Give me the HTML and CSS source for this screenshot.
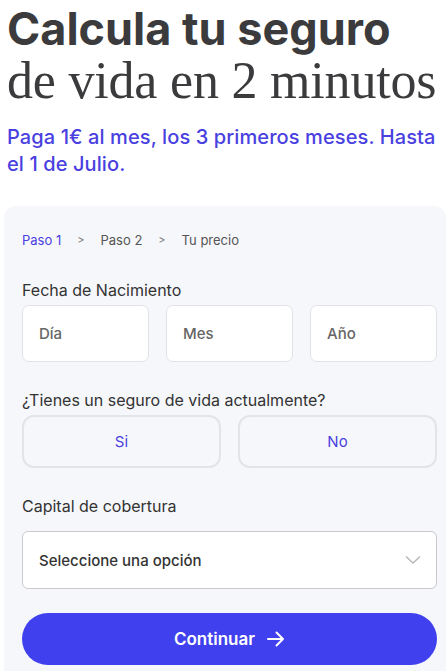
FILE: index.html
```html
<!DOCTYPE html>
<html lang="es">
<head>
<meta charset="utf-8">
<link rel="stylesheet" href="styles.css">
</head>
<body>
<header class="hero">
  <h1 class="title"><span class="title-bold">Calcula tu seguro</span><span class="title-serif">de vida en 2 minutos</span></h1>
  <p class="promo">Paga 1€ al mes, los 3 primeros meses. Hasta el 1 de Julio.</p>
</header>
<section class="card">
  <nav class="steps">
    <span class="step active">Paso 1</span>
    <span class="sep">&gt;</span>
    <span class="step">Paso 2</span>
    <span class="sep">&gt;</span>
    <span class="step">Tu precio</span>
  </nav>
  <div class="field">
    <label class="label">Fecha de Nacimiento</label>
    <div class="date-row">
      <div class="input">Día</div>
      <div class="input">Mes</div>
      <div class="input">Año</div>
    </div>
  </div>
  <div class="field">
    <label class="label">¿Tienes un seguro de vida actualmente?</label>
    <div class="choice-row">
      <div class="choice">Si</div>
      <div class="choice">No</div>
    </div>
  </div>
  <div class="field field-select">
    <label class="label">Capital de cobertura</label>
    <div class="select">
      <span>Seleccione una opción</span>
      <svg class="chev" width="16" height="10" viewBox="0 0 16 10"><path d="M1 1.5 L8 8 L15 1.5" fill="none" stroke="#b5b5ba" stroke-width="1.4"/></svg>
    </div>
  </div>
  <div class="cta">
    <span>Continuar</span>
    <svg width="18" height="16" viewBox="0 0 18 16"><path d="M1 8 H16 M9.5 1.5 L16 8 L9.5 14.5" fill="none" stroke="#fff" stroke-width="2" stroke-linecap="round" stroke-linejoin="round"/></svg>
  </div>
</section>
</body>
</html>
```
FILE: styles.css
```css
* { box-sizing: border-box; }
html, body { margin: 0; padding: 0; background: #fff; }
body { font-family: Inter, "Noto Sans", sans-serif; color: #333; width: 447px; height: 671px; overflow: hidden; }
.hero { padding: 4px 0 0 7px; }
.title { margin: 0; font-weight: normal; display: flex; flex-direction: column; }
.title-bold { font-family: Inter, sans-serif; font-weight: 700; font-size: 45px; line-height: 50px; letter-spacing: 0; color: #3b3b3d; white-space: nowrap; }
.title-serif { font-family: "Liberation Serif", serif; font-weight: 400; font-size: 52px; line-height: 54px; color: #3b3b3d; white-space: nowrap; letter-spacing: -0.2px; }
.promo { margin: 16px 0 0 0; font-family: Inter, sans-serif; font-weight: 500; font-size: 20px; line-height: 27px; color: #4a3fe0; letter-spacing: 0.1px; }
.card { margin: 28px 1px 0 4px; background: #f6f7fa; border-radius: 12px 12px 0 0; padding: 26px 9px 10px 18px; height: 480px; }
.steps { display: flex; gap: 16px; align-items: center; font-size: 13px; color: #555; }
.step.active { color: #4a3fe0; }
.sep { font-size: 11px; color: #777; }
.field { margin-top: 32px; }
.field + .field { margin-top: 28px; }
.label { display: block; font-size: 16px; line-height: 20px; color: #333; margin-bottom: 5px; }
.date-row { display: grid; grid-template-columns: 1fr 1fr 1fr; gap: 17px; }
.input { height: 57px; background: #fff; border: 1px solid #e2e3e7; border-radius: 7px; padding: 0 16px; display: flex; align-items: center; font-size: 15px; font-weight: 500; color: #666; }
.choice-row { display: grid; grid-template-columns: 1fr 1fr; gap: 17px; }
.choice { height: 53px; border: 2px solid #e3e4e8; border-radius: 12px; display: flex; align-items: center; justify-content: center; font-size: 15px; color: #4a3fe0; }
.field-select .label { margin-bottom: 15px; }
.select { height: 58px; background: #fff; border: 1px solid #c9c9ce; border-radius: 6px; display: flex; align-items: center; justify-content: space-between; padding: 0 15px 0 16px; font-size: 15px; font-weight: 500; color: #333; }
.cta { margin-top: 24px; height: 52px; border-radius: 26px; background: #4140ee; color: #fff; display: flex; align-items: center; justify-content: center; gap: 12px; font-size: 17px; font-weight: 600; }
```
